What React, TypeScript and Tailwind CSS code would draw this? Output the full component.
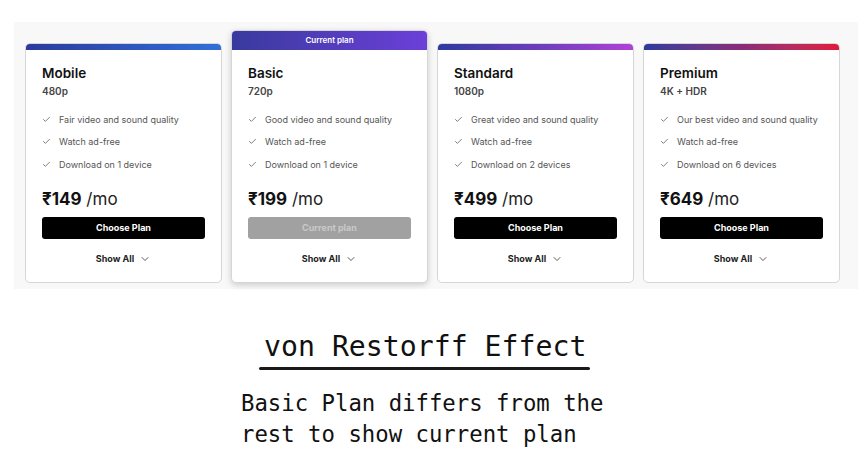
import { Check, ChevronDown } from 'lucide-react';

type Plan = {
    name: string;
    res: string;
    features: string[];
    price: string;
    bar: string;
    current?: boolean;
};

const plans: Plan[] = [
    {
        name: 'Mobile',
        res: '480p',
        features: ['Fair video and sound quality', 'Watch ad-free', 'Download on 1 device'],
        price: '₹149',
        bar: 'bg-gradient-to-r from-[#2a3a9e] to-[#2f70d8]',
    },
    {
        name: 'Basic',
        res: '720p',
        features: ['Good video and sound quality', 'Watch ad-free', 'Download on 1 device'],
        price: '₹199',
        bar: 'bg-gradient-to-r from-[#383a9e] to-[#6c3fd9]',
        current: true,
    },
    {
        name: 'Standard',
        res: '1080p',
        features: ['Great video and sound quality', 'Watch ad-free', 'Download on 2 devices'],
        price: '₹499',
        bar: 'bg-gradient-to-r from-[#2c3a9e] via-[#6a3cbc] to-[#b040d8]',
    },
    {
        name: 'Premium',
        res: '4K + HDR',
        features: ['Our best video and sound quality', 'Watch ad-free', 'Download on 6 devices'],
        price: '₹649',
        bar: 'bg-gradient-to-r from-[#2b3a9e] via-[#8a2a78] to-[#e2173a]',
    },
];

function PlanCard({ plan }: { plan: Plan }) {
    return (
        <div
            className={`w-[197px] flex flex-col rounded-[5px] border border-[#d6d6d6] bg-white overflow-hidden ${
                plan.current ? 'shadow-[0_2px_6px_rgba(0,0,0,0.18)]' : ''
            }`}
        >
            {/* top bar / banner */}
            {plan.current ? (
                <div className={`h-[19px] flex items-center justify-center text-[8px] font-semibold text-white ${plan.bar}`}>
                    Current plan
                </div>
            ) : (
                <div className={`h-[6px] ${plan.bar}`} />
            )}

            <div className="flex flex-col px-[16px] pt-[15px] pb-[17px]">
                <p className="text-[13.5px] leading-[16px] font-semibold text-[#111]">{plan.name}</p>
                <p className="mt-[3px] text-[10px] leading-[14px] font-semibold text-[#444]">{plan.res}</p>

                <ul className="mt-[15px] flex flex-col gap-[9px]">
                    {plan.features.map(f => (
                        <li key={f} className="flex items-center gap-[8px] text-[9px] leading-[13.5px] text-[#555]">
                            <Check size={9} strokeWidth={2} className="text-[#555]" />
                            {f}
                        </li>
                    ))}
                </ul>

                <p className="mt-[17px] text-[17px] leading-[22px] text-[#111]">
                    <span className="font-bold">{plan.price}</span> <span className="font-normal text-[#222]">/mo</span>
                </p>

                {plan.current ? (
                    <div className="mt-[7px] h-[22px] rounded-[3px] bg-[#a1a1a1] flex items-center justify-center text-[9px] font-bold text-[#c9c9c9]">
                        Current plan
                    </div>
                ) : (
                    <div className="mt-[7px] h-[22px] rounded-[3px] bg-black flex items-center justify-center text-[9px] font-bold text-white">
                        Choose Plan
                    </div>
                )}

                <div className="mt-[14px] flex items-center justify-center gap-[5px] text-[9px] leading-[12px] font-bold text-[#222]">
                    Show All
                    <ChevronDown size={12} strokeWidth={1.6} className="text-[#333]" />
                </div>
            </div>
        </div>
    );
}

export default function App() {
    return (
        <div className="w-[868px] h-[461px] bg-white overflow-hidden" style={{ fontFamily: 'Inter, "Noto Sans", sans-serif' }}>
            {/* plans panel */}
            <div className="ml-[14px] mt-[22px] w-[844px] h-[267px] bg-[#f8f8f8] flex items-end gap-[9px] pl-[11px] pb-[6px]">
                {plans.map(p => (
                    <PlanCard key={p.name} plan={p} />
                ))}
            </div>

            {/* annotation */}
            <div className="font-['DejaVu_Sans_Mono',monospace] text-[#111]">
                <div className="ml-[259px] mt-[41px] w-[331px] flex flex-col">
                    <p className="pl-[5px] text-[28.2px] leading-[34px]">von Restorff Effect</p>
                    <div className="mt-[3px] h-[3px] w-full rounded-full bg-[#1a1a1a]" />
                </div>
                <p className="ml-[241px] mt-[18px] text-[22.3px] leading-[31px]">
                    Basic Plan differs from the
                    <br />
                    rest to show current plan
                </p>
            </div>
        </div>
    );
}
